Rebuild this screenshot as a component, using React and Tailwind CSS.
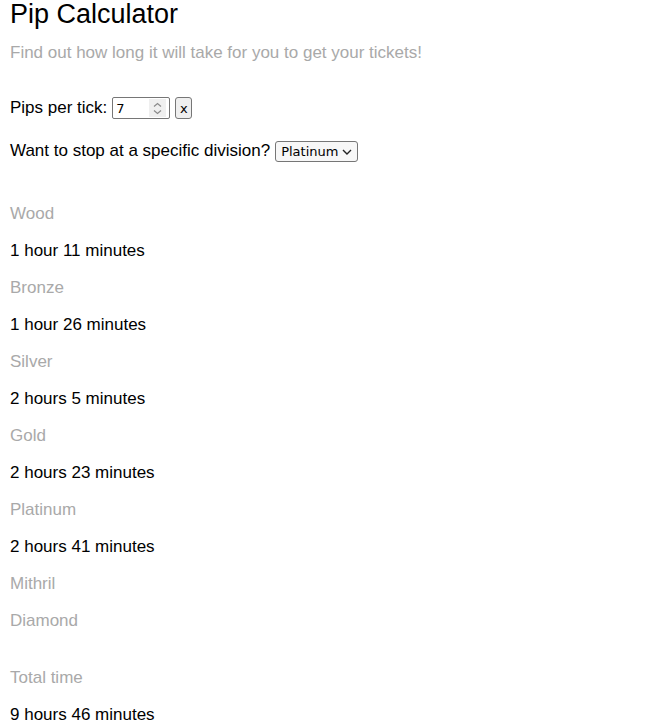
import React from "react";

const rows = [
  ["Wood", "1 hour 11 minutes"],
  ["Bronze", "1 hour 26 minutes"],
  ["Silver", "2 hours 5 minutes"],
  ["Gold", "2 hours 23 minutes"],
  ["Platinum", "2 hours 41 minutes"],
  ["Mithril", null],
  ["Diamond", null],
];

const ctrlFont = { fontFamily: '"DejaVu Sans", sans-serif' };

export default function App() {
  return (
    <div className="px-[10px] text-[17px] text-black bg-white min-h-[723px]" style={{ fontFamily: '"Liberation Sans", Arial, sans-serif' }}>
      <h1 className="text-[27px] leading-[28px] pt-0">Pip Calculator</h1>
      <p className="mt-[15px] leading-[20px] text-[#a9a9a9]">Find out how long it will take for you to get your tickets!</p>
      <div className="mt-[34px] flex items-center h-[22px] leading-[20px]">
        <span>Pips per tick:</span>
        <div className="ml-[5px] w-[58px] h-[22px] border border-[#767676] rounded-[2px] flex items-center">
          <input
            type="text"
            defaultValue="7"
            className="block w-[34px] h-full pl-[3px] text-[13px] text-black outline-none"
            style={ctrlFont}
          />
          <span className="ml-auto mr-[3px] w-[17px] h-[18px] bg-[#efefef] flex items-center justify-center">
            <svg width="9" height="13" viewBox="0 0 9 13" fill="none" stroke="#8a8a8a" strokeWidth="1.2">
              <path d="M1 4.5 L4.5 1.5 L8 4.5" />
              <path d="M1 8.5 L4.5 11.5 L8 8.5" />
            </svg>
          </span>
        </div>
        <button
          className="ml-[5px] w-[17px] h-[22px] border border-[#767676] rounded-[3px] bg-[#efefef] text-[13px] leading-none flex items-center justify-center"
          style={ctrlFont}
        >
          x
        </button>
      </div>
      <div className="mt-[21px] flex items-center h-[22px]">
        <span>Want to stop at a specific division?</span>
        <div className="relative ml-[5px] w-[83px] h-[21px]">
          <select
            defaultValue="Platinum"
            className="block appearance-none w-full h-full border border-[#767676] rounded-[3px] bg-[#f7f7f7] text-[13px] pl-[5px] text-black outline-none"
            style={ctrlFont}
          >
            <option>Wood</option>
            <option>Bronze</option>
            <option>Silver</option>
            <option>Gold</option>
            <option>Platinum</option>
            <option>Mithril</option>
            <option>Diamond</option>
          </select>
          <svg className="absolute right-[6px] top-[8px] pointer-events-none" width="10" height="6" viewBox="0 0 10 6" fill="none" stroke="#222" strokeWidth="1.4">
            <path d="M1 1 L5 5 L9 1" />
          </svg>
        </div>
      </div>
      <div className="mt-[33px] flex flex-col">
        {rows.map(([name, time]) => (
          <React.Fragment key={name}>
            <div className="h-[37px] flex items-center text-[#a9a9a9]">{name}</div>
            {time && <div className="h-[37px] flex items-center">{time}</div>}
          </React.Fragment>
        ))}
      </div>
      <div className="mt-[20px] flex flex-col">
        <div className="h-[37px] flex items-center text-[#a9a9a9]">Total time</div>
        <div className="h-[37px] flex items-center">9 hours 46 minutes</div>
      </div>
    </div>
  );
}
